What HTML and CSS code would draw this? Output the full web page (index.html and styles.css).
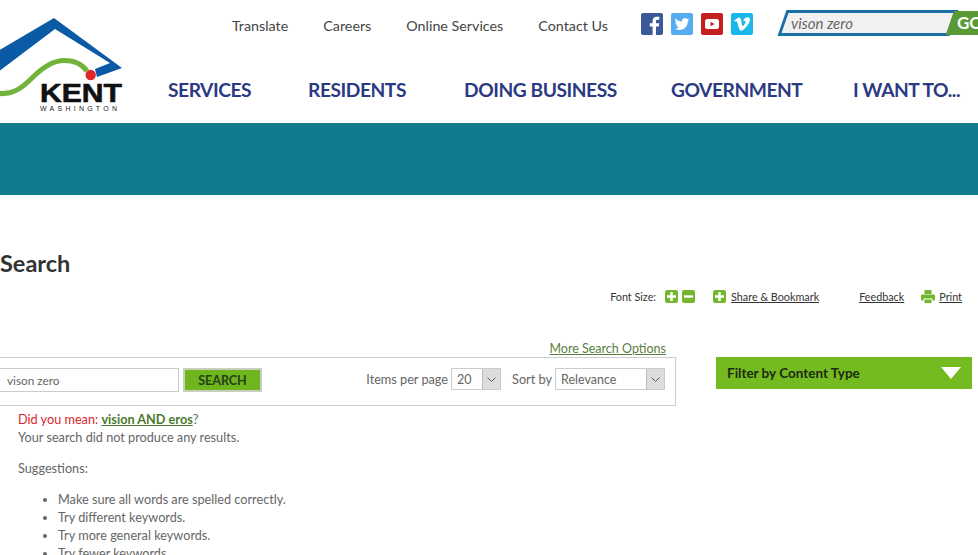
FILE: index.html
```html
<!DOCTYPE html>
<html lang="en">
<head>
<meta charset="utf-8">
<title>Search - Kent, Washington</title>
<link rel="stylesheet" href="styles.css">
</head>
<body>
<header class="site-header">
  <a class="logo" href="#">
    <svg class="logo-svg" viewBox="0 0 125 123" width="125" height="123">
      <polygon fill="#0b5aa5" points="-2,51 54,18 122,68 97,77 95,69 110,63 55,29 -2,72"/>
      <path fill="none" stroke="#72b33a" stroke-width="5" d="M-4,93 C12,96 22,88 32,78 C44,66 54,60.500 64,60.500 C74,60.500 82,64 87,71"/>
      <circle cx="90.700" cy="75" r="5.200" fill="#e0262b"/>
      <text class="logo-kent" x="40" y="102" textLength="82" lengthAdjust="spacingAndGlyphs">KENT</text>
      <text class="logo-wa" x="40" y="111" textLength="77">WASHINGTON</text>
    </svg>
  </a>
  <div class="header-main">
    <div class="utility">
      <nav class="utility-links">
        <a href="#">Translate</a>
        <a href="#">Careers</a>
        <a href="#">Online Services</a>
        <a href="#">Contact Us</a>
      </nav>
      <div class="social">
        <a class="social-icon fb" href="#"><svg viewBox="0 0 22 22" width="22" height="22"><path fill="#fff" d="M15 22v-8.500h2.800l.4-3.300H15V8.300c0-1 .3-1.600 1.600-1.600h1.700V3.800c-.3 0-1.300-.1-2.500-.1-2.500 0-4.200 1.500-4.200 4.300v2.200H8.800v3.300h2.800V22z"/></svg></a>
        <a class="social-icon tw" href="#"><svg viewBox="-6 -6 36 36" width="22" height="22"><path fill="#fff" d="M23.950 4.570a10 10 0 0 1-2.820.77 4.960 4.960 0 0 0 2.160-2.720c-.95.55-2 .95-3.120 1.180a4.920 4.920 0 0 0-8.380 4.480C7.690 8.100 4.070 6.130 1.640 3.160a4.820 4.820 0 0 0-.67 2.480c0 1.710.87 3.210 2.190 4.100a4.900 4.900 0 0 1-2.230-.62v.06a4.920 4.920 0 0 0 3.950 4.830 5 5 0 0 1-2.210.08 4.940 4.940 0 0 0 4.600 3.420A9.870 9.870 0 0 1 0 19.540a14 14 0 0 0 7.560 2.210c9.050 0 14-7.500 14-13.980 0-.21 0-.42-.02-.63a9.940 9.940 0 0 0 2.460-2.550z"/></svg></a>
        <a class="social-icon yt" href="#"><svg viewBox="0 0 22 22" width="22" height="22"><rect x="4" y="6" width="14" height="10" rx="2.500" fill="#fff"/><polygon points="9.500,8.800 13.500,11 9.500,13.200" fill="#c4201f"/></svg></a>
        <a class="social-icon vm" href="#"><svg viewBox="-5 -5 34 34" width="22" height="22"><path fill="#fff" d="M23.980 6.420c-.1 2.340-1.740 5.550-4.900 9.620-3.270 4.250-6.030 6.380-8.300 6.380-1.400 0-2.580-1.300-3.550-3.900L5.300 11.400C4.600 8.800 3.800 7.500 2.980 7.500c-.18 0-.82.38-1.900 1.140L0 7.200c1.200-1.050 2.370-2.100 3.530-3.150C5.100 2.680 6.300 1.960 7.100 1.900c1.900-.18 3.060 1.120 3.500 3.900.47 3 .8 4.860.98 5.600.55 2.470 1.150 3.700 1.800 3.700.5 0 1.270-.8 2.300-2.400 1.020-1.600 1.560-2.830 1.640-3.670.15-1.380-.4-2.070-1.630-2.070-.58 0-1.180.13-1.800.4 1.200-3.900 3.480-5.800 6.850-5.700 2.500.08 3.680 1.700 3.540 4.860z"/></svg></a>
      </div>
      <form class="site-search">
        <div class="site-search-box"><span class="site-search-text">vison zero</span></div>
        <div class="site-search-go"><span class="site-search-go-text">GO</span></div>
      </form>
    </div>
    <nav class="main-nav">
      <a href="#">SERVICES</a>
      <a href="#">RESIDENTS</a>
      <a href="#">DOING BUSINESS</a>
      <a href="#">GOVERNMENT</a>
      <a href="#">I WANT TO...</a>
    </nav>
  </div>
</header>
<div class="band"></div>
<main class="content">
  <h1 class="page-title">Search</h1>
  <div class="tools">
    <span class="tool-label">Font Size:</span>
    <span class="tool-btn"><svg viewBox="0 0 9 9" width="9" height="9"><path fill="#fff" d="M3.300 0h2.400v3.300H9v2.400H5.700V9H3.300V5.700H0V3.300h3.300z"/></svg></span>
    <span class="tool-btn"><svg viewBox="0 0 9 9" width="9" height="9"><path fill="#fff" d="M0 3.300h9v2.400H0z"/></svg></span>
    <span class="tool-btn share"><svg viewBox="0 0 9 9" width="9" height="9"><path fill="#fff" d="M3.300 0h2.400v3.300H9v2.400H5.700V9H3.300V5.700H0V3.300h3.300z"/></svg></span>
    <a class="tool-link" href="#">Share &amp; Bookmark</a>
    <a class="tool-link feedback" href="#">Feedback</a>
    <svg class="print-icon" viewBox="0 0 14 13" width="14" height="13"><path fill="#74b72e" d="M3.500 0h7v4h-7zM1.500 4.500h11c.8 0 1.500.7 1.500 1.500v3.500c0 .6-.4 1-1 1h-1.500V8.500h-9v2H1c-.6 0-1-.4-1-1V6c0-.8.7-1.500 1.500-1.500zM3.500 9.500h7V13h-7z"/></svg>
    <a class="tool-link" href="#">Print</a>
  </div>
  <div class="columns">
    <section class="results">
      <div class="more-options"><a href="#">More Search Options</a></div>
      <div class="search-panel">
        <input class="query" type="text" value="vison zero">
        <button class="search-btn" type="button">SEARCH</button>
        <div class="panel-options">
          <span class="opt-label">Items per page</span>
          <span class="fake-select items"><span class="fake-value">20</span><span class="fake-arrow"><svg viewBox="0 0 9 5" width="9" height="5"><path fill="none" stroke="#555" d="M.5.500 4.500 4.500 8.500.500"/></svg></span></span>
          <span class="opt-label sort">Sort by</span>
          <span class="fake-select sorts"><span class="fake-value">Relevance</span><span class="fake-arrow"><svg viewBox="0 0 9 5" width="9" height="5"><path fill="none" stroke="#555" d="M.5.500 4.500 4.500 8.500.500"/></svg></span></span>
        </div>
      </div>
      <div class="messages">
        <p class="did-you-mean"><span class="red">Did you mean: </span><a href="#">vision AND eros</a>?</p>
        <p class="no-results">Your search did not produce any results.</p>
        <p class="suggest-title">Suggestions:</p>
        <ul class="suggest-list">
          <li>Make sure all words are spelled correctly.</li>
          <li>Try different keywords.</li>
          <li>Try more general keywords.</li>
          <li>Try fewer keywords.</li>
        </ul>
      </div>
    </section>
    <aside class="filter">
      <span class="filter-title">Filter by Content Type</span>
      <span class="filter-arrow"></span>
    </aside>
  </div>
</main>
</body>
</html>
```
FILE: styles.css
```css
html, body {
  margin: 0;
  height: 555px;
  overflow: hidden;
  background: #fff;
}
body {
  width: 978px;
  font-family: Lato, "Noto Sans", sans-serif;
  color: #666;
  font-size: 13px;
}
a { color: inherit; }

.site-header {
  display: flex;
  height: 123px;
  overflow: hidden;
}
.logo {
  display: block;
  flex: 0 0 125px;
  width: 125px;
}
.logo-svg { display: block; overflow: hidden; }
.logo-kent {
  font-family: "Liberation Sans", sans-serif;
  font-weight: 700;
  font-size: 26px;
  fill: #111;
  stroke: #111;
  stroke-width: .6px;
}
.logo-wa {
  font-family: "Liberation Sans", sans-serif;
  font-size: 7px;
  fill: #222;
}
.header-main {
  flex: 1 1 auto;
  min-width: 0;
}
.utility {
  display: flex;
  align-items: flex-start;
  height: 50px;
  padding-left: 107px;
}
.utility-links {
  display: flex;
  gap: 35px;
  padding-top: 17px;
  font-size: 14.300px;
  line-height: 18px;
  width: 409px;
  flex: 0 0 409px;
}
.utility-links a {
  text-decoration: none;
  color: #444;
  white-space: nowrap;
}
.social {
  display: flex;
  gap: 8px;
  padding-top: 13px;
  flex: 0 0 114px;
}
.social-icon {
  display: block;
  width: 22px;
  height: 22px;
  border-radius: 2px;
  overflow: hidden;
}
.social-icon svg { display: block; }
.fb { background: #3b5998; }
.tw { background: #55acee; }
.yt { background: #c4201f; }
.vm { background: #1ab7ea; }

.site-search {
  flex: 0 0 210px;
  display: flex;
  margin: 10px 0 0 27px;
  height: 26px;
}
.site-search-box {
  box-sizing: border-box;
  width: 172px;
  height: 26px;
  border: 3px solid #1a6fa6;
  border-right-width: 4px;
  background: #f1f1f1;
  transform: skewX(-19deg);
  flex: 0 0 172px;
}
.site-search-text {
  display: block;
  transform: skewX(19deg);
  font-style: italic;
  font-size: 15px;
  line-height: 20px;
  padding-left: 6px;
  color: #666;
}
.site-search-go {
  width: 60px;
  height: 24px;
  margin: 1px 0 0 -4px;
  background: #5a9a35;
  transform: skewX(-19deg);
  flex: 0 0 60px;
}
.site-search-go-text {
  display: block;
  transform: skewX(19deg);
  color: #fff;
  font-weight: 700;
  font-size: 17px;
  line-height: 24px;
  padding-left: 7px;
}
.main-nav {
  display: grid;
  grid-template-columns: 84px 100px 151px 126px 111px;
  column-gap: 56px;
  padding: 27px 0 0 43px;
  font-weight: 700;
  font-size: 19.200px;
  letter-spacing: -.45px;
  line-height: 26px;
  white-space: nowrap;
}
.main-nav a {
  color: #2b3a82;
  text-decoration: none;
}

.band {
  height: 72px;
  background: #0e7a8b;
}

.content { position: relative; }
.page-title {
  margin: 0;
  padding-top: 53px;
  font-size: 23.500px;
  line-height: 30px;
  font-weight: 700;
  color: #333;
}
.tools {
  display: flex;
  align-items: center;
  justify-content: flex-end;
  height: 16px;
  margin-top: 10px;
  padding-right: 16px;
  font-size: 10.800px;
  color: #333;
}
.tool-btn {
  display: flex;
  align-items: center;
  justify-content: center;
  width: 13px;
  height: 13px;
  border-radius: 2px;
  margin-left: 4px;
  background: #74b72e;
}
.tool-label { margin-right: 5px; }
.tool-btn.share { margin-left: 18px; margin-right: 5px; }
.tool-link { color: #333; white-space: nowrap; }
.tool-link.feedback { margin-left: 40px; margin-right: 17px; }
.print-icon { margin-right: 4px; }

.columns {
  display: flex;
  align-items: flex-start;
  padding-top: 53px;
}
.results {
  flex: 0 0 676px;
  width: 676px;
  position: relative;
  height: 300px;
}
.more-options {
  position: absolute;
  right: 10px;
  top: -16px;
  font-size: 12.500px;
  line-height: 16px;
  color: #5a7f3e;
}
.search-panel {
  box-sizing: border-box;
  display: flex;
  align-items: flex-start;
  height: 49px;
  margin-left: -20px;
  border: 1px solid #ccc;
  padding: 10px 10px 0 0;
}
.query {
  box-sizing: border-box;
  width: 198px;
  height: 24px;
  border: 1px solid #ccc;
  padding: 0 0 0 25px;
  font: 11.800px Lato, sans-serif;
  color: #666;
  background: #fff;
}
.search-btn {
  box-sizing: border-box;
  width: 79px;
  height: 24px;
  margin-left: 4px;
  border: 2px solid #c8d0bd;
  background: #6fb51e;
  color: #244018;
  font: 700 12.500px Lato, sans-serif;
  padding: 0;
}
.panel-options {
  display: flex;
  align-items: flex-start;
  margin-left: auto;
  font-size: 12.700px;
  line-height: 22px;
  color: #666;
}
.opt-label { white-space: nowrap; }
.opt-label.sort { margin-left: 11px; margin-right: 3px; }
.fake-select {
  box-sizing: border-box;
  display: flex;
  height: 22px;
  border: 1px solid #ccc;
  background: #fff;
}
.fake-select.items { width: 50px; margin-left: 3px; }
.fake-select.sorts { width: 110px; }
.fake-value {
  flex: 1 1 auto;
  padding-left: 5px;
  line-height: 21px;
  font-size: 12.500px;
}
.fake-arrow {
  display: flex;
  align-items: center;
  justify-content: center;
  width: 17px;
  background: #ddd;
  border-left: 1px solid #bbb;
}
.messages {
  padding: 4px 0 0 18px;
  line-height: 18px;
  font-size: 12.700px;
}
.messages p { margin: 0; }
.red { color: #d9252a; }
.did-you-mean a {
  color: #4a7a2c;
  font-weight: 700;
}
.suggest-title { padding-top: 13px; }
.suggest-list {
  margin: 13px 0 0;
  padding: 0 0 0 40px;
  list-style: disc;
}
.filter {
  box-sizing: border-box;
  flex: 0 0 256px;
  display: flex;
  align-items: center;
  justify-content: space-between;
  width: 256px;
  height: 32px;
  margin-left: 40px;
  padding: 0 11px;
  background: #74ba21;
}
.filter-title {
  font-weight: 700;
  font-size: 13.500px;
  color: #1c2a10;
}
.filter-arrow {
  width: 0;
  height: 0;
  border-left: 10px solid transparent;
  border-right: 10px solid transparent;
  border-top: 12px solid #fff;
}
```
